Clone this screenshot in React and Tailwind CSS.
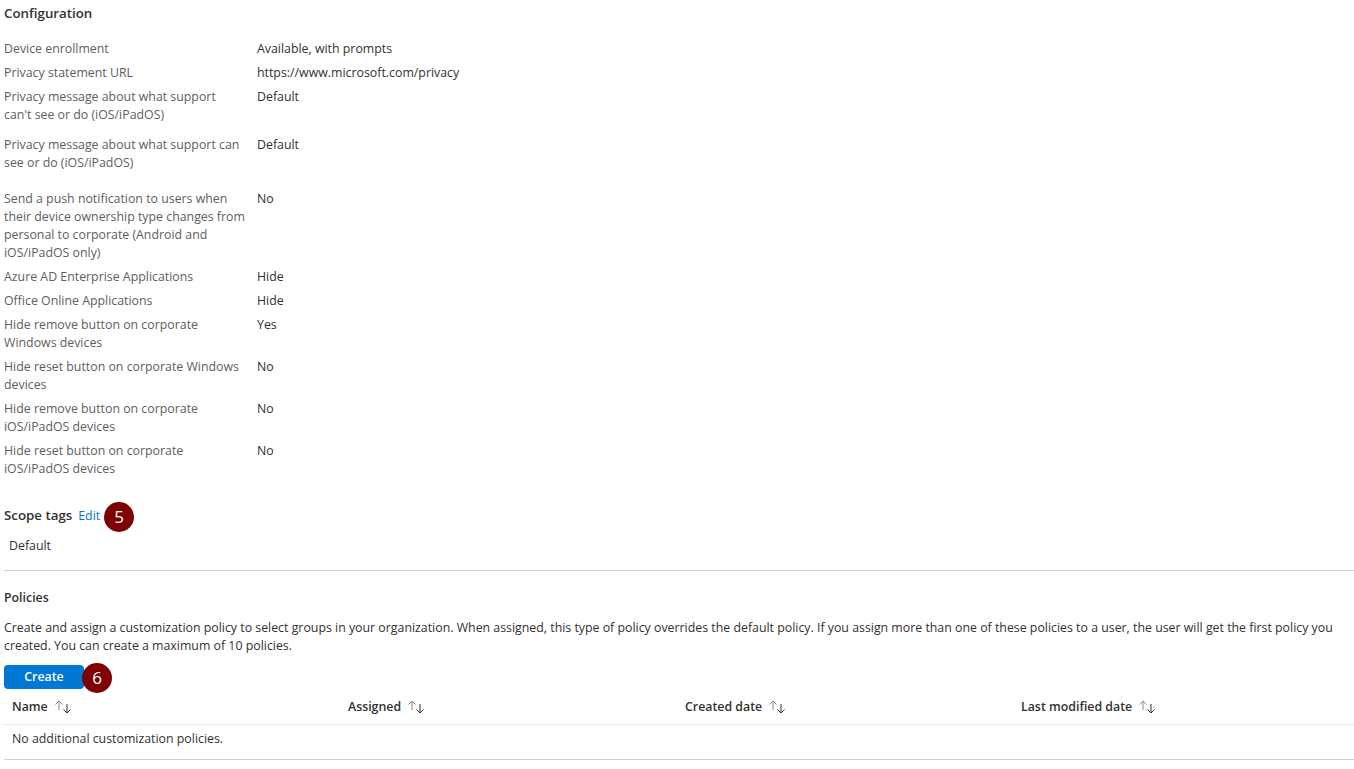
const rows = [
  { label: ['Device enrollment'], value: 'Available, with prompts', pb: 'pb-1.5' },
  { label: ['Privacy statement URL'], value: 'https://www.microsoft.com/privacy', pb: 'pb-1.5' },
  { label: ['Privacy message about what support', "can't see or do (iOS/iPadOS)"], value: 'Default', pb: 'pb-3' },
  { label: ['Privacy message about what support can', 'see or do (iOS/iPadOS)'], value: 'Default', pb: 'pb-[18px]' },
  { label: ['Send a push notification to users when', 'their device ownership type changes from', 'personal to corporate (Android and', 'iOS/iPadOS only)'], value: 'No', pb: 'pb-1.5' },
  { label: ['Azure AD Enterprise Applications'], value: 'Hide', pb: 'pb-1.5' },
  { label: ['Office Online Applications'], value: 'Hide', pb: 'pb-1.5' },
  { label: ['Hide remove button on corporate', 'Windows devices'], value: 'Yes', pb: 'pb-1.5' },
  { label: ['Hide reset button on corporate Windows', 'devices'], value: 'No', pb: 'pb-1.5' },
  { label: ['Hide remove button on corporate', 'iOS/iPadOS devices'], value: 'No', pb: 'pb-1.5' },
  { label: ['Hide reset button on corporate', 'iOS/iPadOS devices'], value: 'No', pb: 'pb-1.5' },
];

const columns = [
  { name: 'Name', width: 'w-[336px]' },
  { name: 'Assigned', width: 'w-[337px]' },
  { name: 'Created date', width: 'w-[336px]' },
  { name: 'Last modified date', width: 'flex-1' },
];

function Badge({ n }) {
  return (
    <span className="flex h-[30px] w-[30px] shrink-0 items-center justify-center rounded-full bg-[#7f0000] text-[17px] text-white">
      {n}
    </span>
  );
}

function SortIcon() {
  return (
    <svg width="18" height="14" viewBox="0 0 18 14" fill="none" strokeWidth="1" className="ml-[6px]">
      <path d="M5 10V1M1.500 4.500L5 1l3.500 3.500" stroke="#8a8886" />
      <path d="M13 4v9M9.500 9.500L13 13l3.500-3.500" stroke="#323130" />
    </svg>
  );
}

export default function App() {
  return (
    <div className="min-h-[769px] overflow-hidden bg-white font-['Open_Sans','Liberation_Sans',sans-serif] text-[12.35px] leading-[18px] text-[#323130]">
      <h2 className="pl-1 pt-1 font-semibold text-[13.3px] leading-[18px]">Configuration</h2>

      <div className="pl-1 pt-[18px]">
        {rows.map((row) => (
          <div key={row.label[0]} className={`flex ${row.pb}`}>
            <div className="w-[253px] shrink-0 text-[#605e5c]">
              {row.label.map((line) => (
                <div key={line}>{line}</div>
              ))}
            </div>
            <div>{row.value}</div>
          </div>
        ))}
      </div>

      <div className="flex items-center pl-1 pt-4">
        <span className="font-semibold text-[13.3px]">Scope tags</span>
        <a className="ml-1.5 translate-y-px text-[#0078d4]">Edit</a>
        <span className="ml-1 translate-y-0.5"><Badge n={5} /></span>
      </div>
      <div className="pl-[9px] pt-[7px]">Default</div>

      <div className="ml-1 mt-[15px] h-px bg-[#d2d0ce]" />

      <h3 className="pl-1 pt-[18px] font-semibold">Policies</h3>
      <p className="pl-1 pt-3 pr-2">
        Create and assign a customization policy to select groups in your organization. When assigned, this type of policy overrides the default policy. If you assign more than one of these policies to a user, the user will get the first policy you
        <br />
        created. You can create a maximum of 10 policies.
      </p>

      <div className="flex items-center pl-1 pt-1.5">
        <button className="h-6 w-20 rounded-sm bg-[#0078d4] font-semibold text-white">Create</button>
        <span className="-ml-0.5 mt-0.5"><Badge n={6} /></span>
      </div>

      <div className="ml-1 flex h-8 items-center border-b border-[#edebe9] pb-1">
        {columns.map((col) => (
          <div key={col.name} className={`flex items-center pl-2 font-semibold ${col.width}`}>
            {col.name}
            <SortIcon />
          </div>
        ))}
      </div>
      <div className="ml-1 h-[35px] border-b border-[#d2d0ce] pl-2 pt-[5px]">No additional customization policies.</div>
    </div>
  );
}
